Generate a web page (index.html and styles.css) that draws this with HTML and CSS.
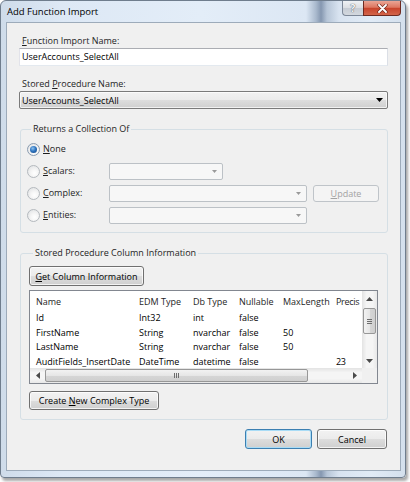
FILE: index.html
```html
<!DOCTYPE html>
<html>
<head>
<meta charset="utf-8">
<link rel="stylesheet" href="styles.css">
</head>
<body>
<div class="window">
  <div class="titlebar">
    <span class="title">Add Function Import</span>
    <div class="caption">
      <div class="cbtn help">?</div>
      <div class="cbtn close">
        <svg width="11" height="9" viewBox="0 0 11 9"><path d="M2 1 L9 8 M9 1 L2 8" stroke="#6b2318" stroke-width="3.2" stroke-linecap="round"/><path d="M2 1 L9 8 M9 1 L2 8" stroke="#fff" stroke-width="1.9" stroke-linecap="round"/></svg>
      </div>
    </div>
  </div>
  <div class="client">
    <div class="lbl lbl-first"><u>F</u>unction Import Name:</div>
    <div class="textbox">UserAccounts_SelectAll</div>
    <div class="lbl lbl-second">Stored <u>P</u>rocedure Name:</div>
    <div class="combo combo-on">
      <span>UserAccounts_SelectAll</span>
      <svg class="arr" width="7" height="4" viewBox="0 0 7 4"><polygon points="0,0 7,0 3.5,4" fill="#000"/></svg>
    </div>

    <fieldset class="group group-returns">
      <legend>Returns a Collection Of</legend>
      <div class="opt">
        <span class="radio checked"><span class="dot"></span></span>
        <span class="optlbl"><u>N</u>one</span>
      </div>
      <div class="opt">
        <span class="radio"></span>
        <span class="optlbl"><u>S</u>calars:</span>
        <div class="combo combo-off w-short"><svg class="arr" width="5" height="3" viewBox="0 0 5 3"><polygon points="0,0 5,0 2.5,3" fill="#9a9a9a"/></svg></div>
      </div>
      <div class="opt">
        <span class="radio"></span>
        <span class="optlbl"><u>C</u>omplex:</span>
        <div class="combo combo-off w-long"><svg class="arr" width="5" height="3" viewBox="0 0 5 3"><polygon points="0,0 5,0 2.5,3" fill="#9a9a9a"/></svg></div>
        <div class="btn btn-disabled btn-update"><span><u>U</u>pdate</span></div>
      </div>
      <div class="opt">
        <span class="radio"></span>
        <span class="optlbl"><u>E</u>ntities:</span>
        <div class="combo combo-off w-long"><svg class="arr" width="5" height="3" viewBox="0 0 5 3"><polygon points="0,0 5,0 2.5,3" fill="#9a9a9a"/></svg></div>
      </div>
    </fieldset>

    <fieldset class="group group-cols">
      <legend>Stored Procedure Column Information</legend>
      <div class="btn btn-get"><span><u>G</u>et Column Information</span></div>
      <div class="listview">
        <div class="lv-content">
          <div class="lv-row lv-head">
            <span>Name</span><span>EDM Type</span><span>Db Type</span><span>Nullable</span><span>MaxLength</span><span class="last">Precis</span>
          </div>
          <div class="lv-row">
            <span>Id</span><span>Int32</span><span>int</span><span>false</span><span></span><span class="last"></span>
          </div>
          <div class="lv-row">
            <span>FirstName</span><span>String</span><span>nvarchar</span><span>false</span><span>50</span><span class="last"></span>
          </div>
          <div class="lv-row">
            <span>LastName</span><span>String</span><span>nvarchar</span><span>false</span><span>50</span><span class="last"></span>
          </div>
          <div class="lv-row">
            <span>AuditFields_InsertDate</span><span>DateTime</span><span>datetime</span><span>false</span><span></span><span class="last">23</span>
          </div>
        </div>
        <div class="vscroll">
          <div class="sarrow"><svg width="7" height="4" viewBox="0 0 7 4"><polygon points="3.5,0 7,4 0,4" fill="#4a4a4a"/></svg></div>
          <div class="vtrack"><div class="vthumb"><span class="grip-h"></span><span class="grip-h"></span><span class="grip-h"></span></div></div>
          <div class="sarrow"><svg width="7" height="4" viewBox="0 0 7 4"><polygon points="0,0 7,0 3.5,4" fill="#4a4a4a"/></svg></div>
        </div>
        <div class="hscroll">
          <div class="sarrow"><svg width="4" height="7" viewBox="0 0 4 7"><polygon points="0,3.5 4,0 4,7" fill="#4a4a4a"/></svg></div>
          <div class="htrack"><div class="hthumb"><span class="grip-v"></span><span class="grip-v"></span><span class="grip-v"></span></div></div>
          <div class="sarrow"><svg width="4" height="7" viewBox="0 0 4 7"><polygon points="0,0 4,3.5 0,7" fill="#4a4a4a"/></svg></div>
        </div>
        <div class="corner"></div>
      </div>
      <div class="btn btn-create"><span>Create <u>N</u>ew Complex Type</span></div>
    </fieldset>

    <div class="footer">
      <div class="btn btn-ok"><span>OK</span></div>
      <div class="btn btn-cancel"><span>Cancel</span></div>
    </div>
  </div>
</div>
</body>
</html>
```
FILE: styles.css
```css
* { box-sizing: border-box; }
html, body { margin: 0; padding: 0; background: #ffffff; }
body {
  width: 410px; height: 482px; overflow: hidden;
  font-family: "Open Sans", "Noto Sans", "DejaVu Sans", sans-serif;
  font-size: 9px; color: #1e1e1e;
}
u { text-decoration: underline; text-underline-offset: 1px; }

.window {
  width: 406px; height: 478px;
  border: 1px solid #6f7d8d;
  border-radius: 6px 6px 4px 4px;
  background: linear-gradient(90deg, #cfdcea 0px, #dde8f5 60px, #e3edf8 200px, #dce7f4 305px, #a9b9cd 315px, #8597b0 320px, #b6c5d7 326px, #d8e3f0 338px, #e1ebf6 370px, #d3dfec 406px);
  box-shadow: 2px 3px 3px rgba(0, 0, 0, 0.35);
  display: flex; flex-direction: column;
}
.titlebar {
  height: 21px; flex: none;
  display: flex; align-items: flex-start;
  padding: 0 4px 0 6px;
}
.title { line-height: 21px; font-size: 9.5px; color: #000; }
.caption { margin-left: auto; display: flex; }
.cbtn {
  height: 15px; display: flex; align-items: center; justify-content: center;
}
.help {
  width: 21px;
  border: 1px solid #7d8898; border-top: none; border-right: none;
  border-radius: 0 0 0 4px;
  background: linear-gradient(#eff2f5, #dcdfe3 48%, #c6ccd4 52%, #d3d8de);
  color: #f8f8f8; font-weight: 700; font-size: 10px; line-height: 14px;
  text-shadow: 0 0 1px #59606a, 0 0 1px #59606a;
}
.close {
  width: 38px;
  border: 1px solid #6e2a20; border-top: none;
  border-radius: 0 0 4px 0;
  background: linear-gradient(#eaa595, #dd7761 45%, #c8442c 52%, #d2654a);
}

.client {
  flex: 1;
  margin: 0 4px 6px 5px;
  border: 1px solid #9dabba;
  background: #f0f0f0;
  padding: 11px 12px 0 12px;
  display: flex; flex-direction: column;
}
.lbl { line-height: 14px; padding-left: 3px; }
.lbl-second { margin-top: 11px; }
.textbox {
  height: 18px; background: #fff;
  border: 1px solid; border-color: #abadb3 #dbdfe6 #e3e9ef #e2e3ea;
  padding-left: 2px; line-height: 16px; color: #000;
}
.combo {
  height: 18px; display: flex; align-items: center;
  border-radius: 2px;
}
.combo .arr { margin-left: auto; }
.combo-on {
  border: 1px solid #7a7a7a;
  background: linear-gradient(#f2f2f2, #ebebeb 50%, #dddddd 51%, #cfcfcf);
  box-shadow: inset 0 0 0 1px rgba(255,255,255,0.7);
  padding: 0 4px 0 2px; color: #000;
}
.combo-off {
  height: 17px;
  border: 1px solid #bcc1c6;
  background: #f7f7f7;
  padding-right: 5px;
}
.w-short { width: 114px; }
.w-long { width: 198px; }

.group {
  margin: 13px 0 0 1px; min-width: 0;
  border: 1px solid #d5dfe5; border-radius: 3px;
}
.group legend {
  line-height: 14px; padding: 0 2px; margin-left: 4px;
  color: #1e1e1e;
}
.group-returns { padding: 2px 6px 6px 6px; }
.opt { height: 22px; display: flex; align-items: center; }
.radio {
  width: 13px; height: 13px; flex: none; border-radius: 50%;
  border: 1px solid #b4b9be;
  background: radial-gradient(circle at 60% 65%, #ffffff 0, #f6f6f6 35%, #dcdee0 100%);
  display: flex; align-items: center; justify-content: center;
}
.radio.checked { border-color: #8a9cb0; }
.radio .dot {
  width: 7px; height: 7px; border-radius: 50%;
  background: radial-gradient(circle at 40% 35%, #8fc3ef 0, #2f75c0 45%, #12427e 100%);
}
.optlbl { margin-left: 3px; width: 66px; line-height: 14px; }

.btn {
  display: flex; align-items: center; justify-content: center;
  border: 1px solid #707070; border-radius: 3px;
  background: linear-gradient(#f2f2f2, #ebebeb 50%, #dddddd 51%, #cfcfcf);
  box-shadow: inset 0 0 0 1px rgba(255,255,255,0.75);
  color: #000; white-space: nowrap;
}
.btn-disabled {
  border-color: #bfc4c9; background: #f4f4f4; box-shadow: none; color: #a3a3a3;
}
.btn-update { width: 66px; height: 17px; margin-left: 6px; }

.group-cols { padding: 6px 9px 9px 8px; }
.btn-get { width: 115px; height: 20px; }
.listview {
  margin-top: 4px; height: 94px;
  border: 1px solid #828790; background: #fff;
  display: grid;
  grid-template-columns: 1fr 15px;
  grid-template-rows: 1fr 15px;
}
.lv-content { overflow: hidden; grid-column: 1; grid-row: 1; }
.lv-row {
  display: grid;
  grid-template-columns: 104px 54px 46px 44px 54px 28px;
  height: 14.7px; line-height: 14.7px; color: #000; white-space: nowrap;
}
.lv-row span { padding-left: 5px; }
.lv-row span:first-child { padding-left: 6px; }
.lv-row span.last { padding-left: 4px; letter-spacing: -0.3px; }
.lv-head { height: 20px; line-height: 21px; color: #1e1e1e; }

.vscroll {
  grid-column: 2; grid-row: 1;
  display: flex; flex-direction: column;
  background: linear-gradient(90deg, #e3e3e3, #f5f5f5 30%, #f5f5f5 70%, #e8e8e8);
}
.sarrow { width: 15px; height: 15px; flex: none; display: flex; align-items: center; justify-content: center; }
.vtrack { flex: 1; padding: 2px 1px 0 1px; }
.vthumb {
  height: 26px;
  border: 1px solid #979797; border-radius: 2px;
  background: linear-gradient(90deg, #f2f2f2, #e6e6e6 50%, #d6d6d6 51%, #cfcfcf);
  display: flex; flex-direction: column; align-items: center; justify-content: center; gap: 1px;
}
.grip-h { width: 5px; height: 1px; background: #6d6d6d; }
.hscroll {
  grid-column: 1; grid-row: 2;
  display: flex;
  background: linear-gradient(#e3e3e3, #f5f5f5 30%, #f5f5f5 70%, #e8e8e8);
}
.htrack { flex: 1; padding: 1px 39px 1px 0; }
.hthumb {
  height: 13px;
  border: 1px solid #979797; border-radius: 2px;
  background: linear-gradient(#f2f2f2, #e6e6e6 50%, #d6d6d6 51%, #cfcfcf);
  display: flex; align-items: center; justify-content: center; gap: 1px;
}
.grip-v { width: 1px; height: 5px; background: #6d6d6d; }
.corner { grid-column: 2; grid-row: 2; background: #f0f0f0; }

.btn-create { width: 130px; height: 19px; margin-top: 7px; }

.footer {
  margin-top: 9px; padding-right: 1px;
  display: flex; justify-content: flex-end; gap: 5px;
}
.btn-ok {
  width: 67px; height: 20px;
  border-color: #3c7fb1;
  box-shadow: inset 0 0 0 1px #a9dcf6;
}
.btn-cancel { width: 70px; height: 20px; }
```
